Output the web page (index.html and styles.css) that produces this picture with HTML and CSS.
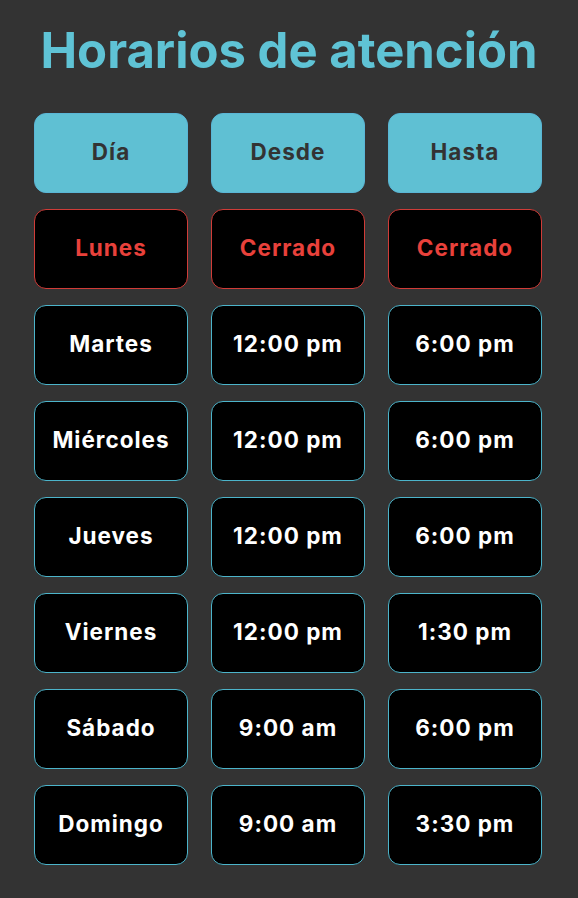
FILE: index.html
```html
<!DOCTYPE html>
<html lang="es">
  <head>
    <meta charset="UTF-8" />
    <meta name="viewport" content="width=device-width, initial-scale=1.0" />
    <title>Horarios de atención</title>
    <link rel="stylesheet" href="styles.css">
  </head>
  <body>
    <h1 class="title">Horarios de atención</h1>

    <div class="schedule">
      <div class="cell head">Día</div>
      <div class="cell head">Desde</div>
      <div class="cell head">Hasta</div>

      <div class="cell closed">Lunes</div>
      <div class="cell closed">Cerrado</div>
      <div class="cell closed">Cerrado</div>

      <div class="cell">Martes</div>
      <div class="cell">12:00 pm</div>
      <div class="cell">6:00 pm</div>

      <div class="cell">Miércoles</div>
      <div class="cell">12:00 pm</div>
      <div class="cell">6:00 pm</div>

      <div class="cell">Jueves</div>
      <div class="cell">12:00 pm</div>
      <div class="cell">6:00 pm</div>

      <div class="cell">Viernes</div>
      <div class="cell">12:00 pm</div>
      <div class="cell">1:30 pm</div>

      <div class="cell">Sábado</div>
      <div class="cell">9:00 am</div>
      <div class="cell">6:00 pm</div>

      <div class="cell">Domingo</div>
      <div class="cell">9:00 am</div>
      <div class="cell">3:30 pm</div>
    </div>
  </body>
</html>
```

FILE: styles.css
```css
body {
  margin: 0;
  background: #333333;
  font-family: Inter, "Liberation Sans", sans-serif;
}

.title {
  margin: 0;
  padding-top: 24px;
  font-size: 49px;
  line-height: 54px;
  font-weight: 700;
  letter-spacing: 0;
  text-align: center;
  color: #5fc3d5;
}

.schedule {
  display: grid;
  grid-template-columns: repeat(3, 154px);
  grid-auto-rows: 80px;
  column-gap: 23px;
  row-gap: 16px;
  justify-content: center;
  margin-top: 35px;
  padding-right: 2px;
}

.cell {
  display: flex;
  align-items: center;
  justify-content: center;
  box-sizing: border-box;
  padding-bottom: 3px;
  border: 1px solid #4cb4ca;
  border-radius: 12px;
  background: #000000;
  color: #ffffff;
  font-size: 22.5px;
  font-weight: 700;
  letter-spacing: 1px;
}

.head {
  background: #5fc0d3;
  border-color: #5ab6d6;
  color: #333333;
}

.closed {
  border-color: #d03c38;
  color: #e8413b;
}
```
